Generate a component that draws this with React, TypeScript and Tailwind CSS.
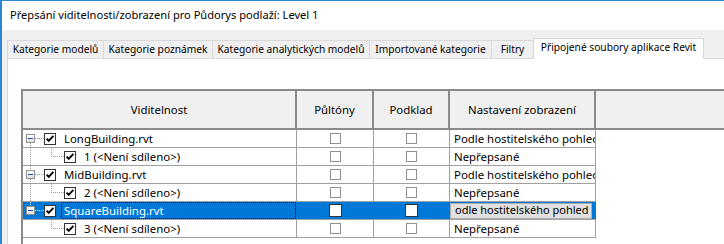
import React from "react";

type RowData = {
  level: 0 | 1;
  name: string;
  setting: string;
  selected?: boolean;
  up?: boolean;
  down?: boolean;
  cont?: boolean;
};

const rows: RowData[] = [
  { level: 0, name: "LongBuilding.rvt", setting: "Podle hostitelského pohledu", up: false, down: true },
  { level: 1, name: "1 (<Není sdíleno>)", setting: "Nepřepsané", cont: true },
  { level: 0, name: "MidBuilding.rvt", setting: "Podle hostitelského pohledu", up: true, down: true },
  { level: 1, name: "2 (<Není sdíleno>)", setting: "Nepřepsané", cont: true },
  { level: 0, name: "SquareBuilding.rvt", setting: "odle hostitelského pohled", up: true, down: false, selected: true },
  { level: 1, name: "3 (<Není sdíleno>)", setting: "Nepřepsané", cont: false },
];

const TreeCheck = () => (
  <svg width="12" height="12" viewBox="0 0 12 12" className="shrink-0">
    <rect x="0.5" y="0.5" width="11" height="11" fill="#fff" stroke="#333" />
    <path d="M2.6 5.6 L4.7 7.9 L9.4 2.8" stroke="#000" strokeWidth="1.9" fill="none" />
  </svg>
);

const ParentLines = ({ up, down, sel }: { up?: boolean; down?: boolean; sel?: boolean }) => {
  const c = sel ? "#ffffff" : "#a0a0a0";
  return (
    <svg width="21" height="17" viewBox="0 0 21 17" className="shrink-0">
      {up && <line x1="7.5" y1="0" x2="7.5" y2="4" stroke={c} strokeDasharray="1 1" />}
      {down && <line x1="7.5" y1="13" x2="7.5" y2="17" stroke={c} strokeDasharray="1 1" />}
      <line x1="12" y1="8.5" x2="21" y2="8.5" stroke={c} strokeDasharray="1 1" />
      <defs>
        <linearGradient id="mg" x1="0" y1="0" x2="0" y2="1">
          <stop offset="0" stopColor="#ffffff" />
          <stop offset="1" stopColor="#dcdcdc" />
        </linearGradient>
      </defs>
      <rect x="3.5" y="4.5" width="8" height="8" fill="url(#mg)" stroke="#919191" />
      <line x1="5" y1="8.5" x2="10" y2="8.5" stroke="#1f4fa8" />
    </svg>
  );
};

const ChildLines = ({ cont }: { cont?: boolean }) => (
  <svg width="41" height="17" viewBox="0 0 41 17" className="shrink-0">
    {cont && <line x1="7.5" y1="0" x2="7.5" y2="17" stroke="#a0a0a0" strokeDasharray="1 1" />}
    <line x1="28.5" y1="0" x2="28.5" y2="8" stroke="#a0a0a0" strokeDasharray="1 1" />
    <line x1="28" y1="8.5" x2="41" y2="8.5" stroke="#a0a0a0" strokeDasharray="1 1" />
  </svg>
);

const Box = ({ sel }: { sel?: boolean }) =>
  sel ? (
    <div className="w-[13px] h-[13px] border border-[#333333] bg-white" />
  ) : (
    <div className="w-[11px] h-[11px] border border-[#8f8f8f] bg-white" />
  );

const Row = ({ r }: { r: RowData }) => {
  const sel = !!r.selected;
  const bc = sel ? "border-r-[#0078d7]" : "border-r-[#a0a0a0]";
  return (
    <div className={`flex h-[18px] border-b border-[#a0a0a0] ${sel ? "bg-[#0078d7] text-white" : "bg-white text-black"}`}>
      <div className={`w-[274px] shrink-0 border-r ${bc} flex items-center overflow-hidden`}>
        {r.level === 0 ? (
          <>
            <ParentLines up={r.up} down={r.down} sel={sel} />
            <TreeCheck />
            {sel ? (
              <div className="ml-[5px] flex-1 h-full border border-dotted border-black pl-[2px] flex items-center whitespace-nowrap">
                {r.name}
              </div>
            ) : (
              <span className="ml-[8px] whitespace-nowrap">{r.name}</span>
            )}
          </>
        ) : (
          <>
            <ChildLines cont={r.cont} />
            <TreeCheck />
            <span className="ml-[8px] whitespace-nowrap">{r.name}</span>
          </>
        )}
      </div>
      <div className={`w-[77px] shrink-0 border-r ${bc} flex items-center justify-center`}>
        <Box sel={sel} />
      </div>
      <div className={`w-[76px] shrink-0 border-r ${bc} flex items-center justify-center`}>
        <Box sel={sel} />
      </div>
      <div className={`w-[146px] shrink-0 border-r ${bc} flex items-center overflow-hidden`}>
        {sel ? (
          <div className="w-[142px] h-[16px] bg-[#e1e1e1] border border-[#adadad] text-black pl-[4px] flex items-center whitespace-nowrap overflow-hidden text-[11px]">
            {r.setting}
          </div>
        ) : (
          <span className="pl-[4px] whitespace-nowrap">{r.setting}</span>
        )}
      </div>
    </div>
  );
};

const tabs = [
  { label: "Kategorie modelů", w: "w-[97px] border-l" },
  { label: "Kategorie poznámek", w: "w-[109px]" },
  { label: "Kategorie analytických modelů", w: "w-[157px]" },
  { label: "Importované kategorie", w: "w-[122px]" },
  { label: "Filtry", w: "w-[42px]" },
];

export default function App() {
  return (
    <div className="w-[724px] h-[244px] overflow-hidden bg-[#f0f0f0] border-t border-l-2 border-[#2b86d6] flex flex-col font-['Noto_Sans',sans-serif] text-black">
      <div className="h-[29px] shrink-0 bg-white flex items-center pl-[8px] text-[11.1px]">
        Přepsání viditelnosti/zobrazení pro Půdorys podlaží: Level 1
      </div>
      <div className="flex-1 flex flex-col pl-[5px] pt-[8px]">
        <div className="h-[20px] flex items-end text-[10.2px] shrink-0">
          {tabs.map((t) => (
            <div
              key={t.label}
              className={`${t.w} h-[18px] border-t border-r border-[#d9d9d9] bg-[#f0f0f0] flex items-center justify-center whitespace-nowrap shrink-0`}
            >
              {t.label}
            </div>
          ))}
          <div className="w-[171px] h-[21px] -ml-px mb-[-1px] relative z-10 border-t border-l border-r border-[#d9d9d9] bg-white flex items-center justify-center pb-[2px] whitespace-nowrap shrink-0">
            Připojené soubory aplikace Revit
          </div>
        </div>
        <div className="flex-1 w-[900px] bg-white border-t border-l border-[#d9d9d9] pl-[13px] pt-[30px]">
          <div className="h-[200px] w-[900px] border-l-2 border-[#8a8a8a] text-[11.4px]">
            <div className="h-[41px] flex border-t-2 border-b-2 border-[#8a8a8a] bg-[#f0f0f0]">
              <div className="w-[274px] shrink-0 border-r-2 border-[#8a8a8a] flex items-center justify-center">Viditelnost</div>
              <div className="w-[77px] shrink-0 border-r-2 border-[#8a8a8a] flex items-center justify-center">Půltóny</div>
              <div className="w-[76px] shrink-0 border-r-2 border-[#8a8a8a] flex items-center justify-center">Podklad</div>
              <div className="w-[146px] shrink-0 border-r-2 border-[#8a8a8a] flex items-center justify-center">Nastavení zobrazení</div>
              <div className="flex-1" />
            </div>
            <div className="w-[573px]">
              {rows.map((r, i) => (
                <Row key={i} r={r} />
              ))}
            </div>
          </div>
        </div>
      </div>
    </div>
  );
}
